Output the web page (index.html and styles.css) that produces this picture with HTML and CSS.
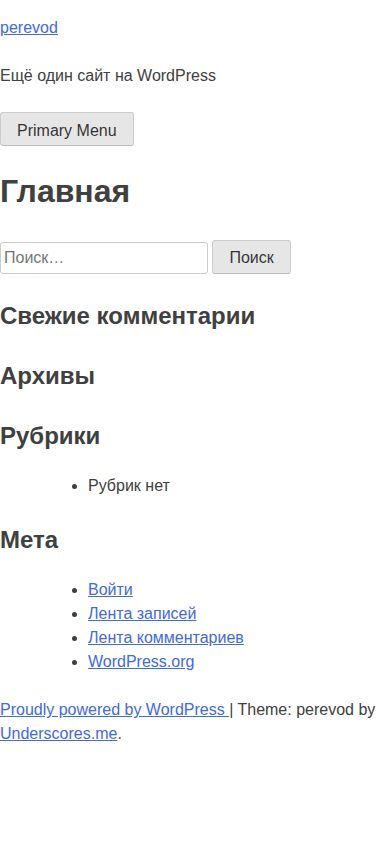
FILE: index.html
```html
<!DOCTYPE html>
<html lang="ru">
<head>
<meta charset="utf-8">
<meta name="viewport" content="width=device-width, initial-scale=1">
<title>perevod</title>
<link rel="stylesheet" href="styles.css">
</head>
<body>
<div class="site">
  <header class="site-header">
    <div class="site-branding">
      <p class="site-title"><a href="#">perevod</a></p>
      <p class="site-description">Ещё один сайт на WordPress</p>
    </div>
    <nav class="main-navigation">
      <button class="btn menu-toggle" type="button">Primary Menu</button>
    </nav>
  </header>
  <div class="site-content">
    <main class="site-main">
      <h1 class="page-title">Главная</h1>
    </main>
    <aside class="widget-area">
      <section class="widget">
        <form class="search-form"><label><input type="search" class="search-field" placeholder="Поиск…"></label> <input type="submit" class="btn search-submit" value="Поиск"></form>
      </section>
      <section class="widget">
        <h2 class="widget-title">Свежие комментарии</h2>
        <ul class="widget-list"></ul>
      </section>
      <section class="widget">
        <h2 class="widget-title">Архивы</h2>
        <ul class="widget-list"></ul>
      </section>
      <section class="widget">
        <h2 class="widget-title">Рубрики</h2>
        <ul class="widget-list">
          <li>Рубрик нет</li>
        </ul>
      </section>
      <section class="widget">
        <h2 class="widget-title">Мета</h2>
        <ul class="widget-list">
          <li><a href="#">Войти</a></li>
          <li><a href="#">Лента записей</a></li>
          <li><a href="#">Лента комментариев</a></li>
          <li><a href="#">WordPress.org</a></li>
        </ul>
      </section>
    </aside>
  </div>
  <footer class="site-footer">
    <div class="site-info"><a href="#">Proudly powered by WordPress </a> | Theme: perevod by <a href="#">Underscores.me</a>.</div>
  </footer>
</div>
</body>
</html>
```
FILE: styles.css
```css
html {
  line-height: 1.15;
}
body {
  margin: 0;
  color: #404040;
  font-family: "Liberation Sans", Arial, sans-serif;
  font-size: 16px;
  line-height: 1.5;
  background: #fff;
}
a {
  color: #4169e1;
}
p {
  margin: 16px 0 24px;
}
.page-title {
  font-size: 32px;
  margin: 21.44px 0;
  font-weight: bold;
}
.widget {
  margin: 0 0 24px;
}
.widget-title {
  font-size: 24px;
  margin: 19.92px 0;
  font-weight: bold;
}
.widget-list {
  margin: 0 0 24px 48px;
  padding-left: 40px;
  list-style: disc;
}
.search-form {
  margin: 0;
  padding-top: 3px;
}
.btn {
  font-family: "Liberation Sans", Arial, sans-serif;
  font-size: 16px;
  line-height: 1;
  color: rgba(0, 0, 0, 0.8);
  background: #e6e6e6;
  border: 1px solid;
  border-color: #ccc #ccc #bbb;
  border-radius: 3px;
  padding: 9.6px 16px 6.4px;
  margin: 0;
}
.search-field {
  font-family: "Liberation Sans", Arial, sans-serif;
  font-size: 16px;
  line-height: 1.5;
  color: #666;
  border: 1px solid #ccc;
  border-radius: 3px;
  padding: 3px;
  margin: 0;
  width: 200px;
  box-sizing: content-box;
}
.search-field::placeholder {
  color: #757575;
}
.site-info {
  margin: 0;
}
```
